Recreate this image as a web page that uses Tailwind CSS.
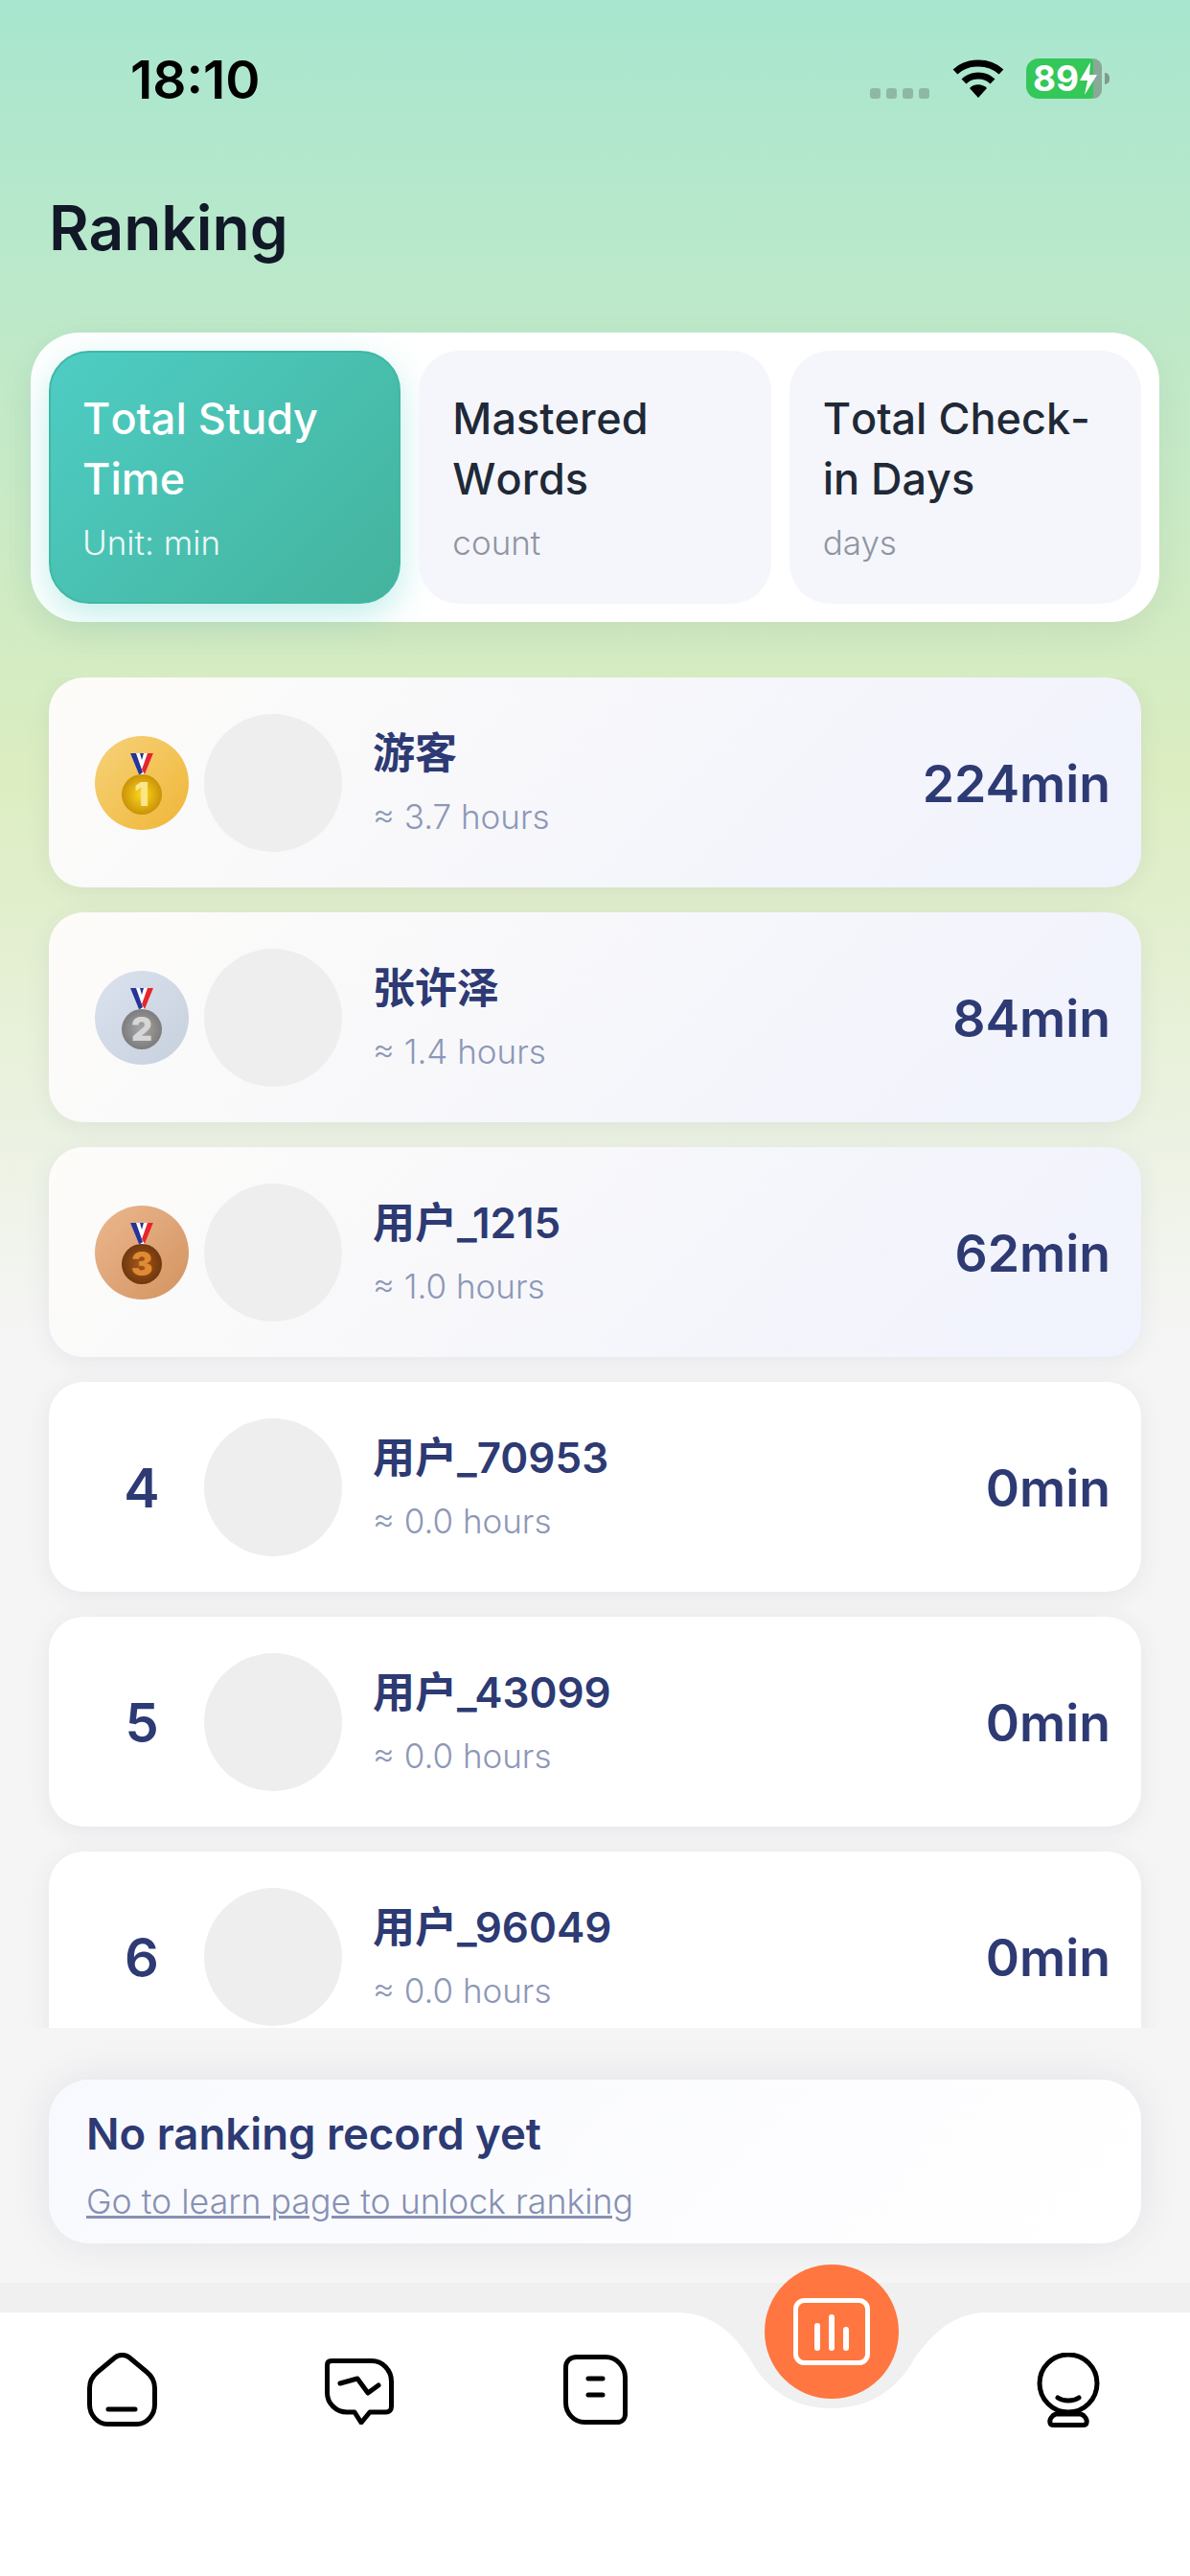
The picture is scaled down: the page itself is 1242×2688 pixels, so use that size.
<!DOCTYPE html>
<html lang="en">
  <head>
    <meta charset="UTF-8" />
    <meta name="viewport" content="width=device-width, initial-scale=1.0" />
    <title>Ranking</title>
    <script src="https://cdn.jsdelivr.net/npm/@tailwindcss/browser@4"></script>
  </head>
  <body>
    <div class="relative flex flex-col w-[1242px] h-[2688px] overflow-hidden font-['Inter','Noto_Sans_CJK_SC',sans-serif] bg-[linear-gradient(180deg,#a8e6cf_0%,#dcedc1_30%,#f5f5f5_52%,#f5f5f5_100%)]">
      <!-- status bar -->
      <div class="flex items-center justify-between h-[164px] pl-[136px] pr-[84px] shrink-0">
        <div class="mt-[2px] text-[55px] font-semibold text-black">18:10</div>
        <div class="flex items-center">
          <div class="flex gap-[6px] mt-[30px] mr-[24px]">
            <div class="w-[11px] h-[11px] rounded-[3px] bg-[#8fb8a3]"></div>
            <div class="w-[11px] h-[11px] rounded-[3px] bg-[#8fb8a3]"></div>
            <div class="w-[11px] h-[11px] rounded-[3px] bg-[#8fb8a3]"></div>
            <div class="w-[11px] h-[11px] rounded-[3px] bg-[#8fb8a3]"></div>
          </div>
          <svg class="w-[54px] h-[40px] mr-[23px]" viewBox="0 0 54 40" fill="none">
            <path d="M3 13 C16 1 38 1 51 13" stroke="#000" stroke-width="7" />
            <path d="M12 23 C20 15 34 15 42 23" stroke="#000" stroke-width="7" />
            <path d="M18 30 C23 25 31 25 36 30 L27 40 Z" fill="#000" />
          </svg>
          <div class="relative flex items-center w-[79px] h-[42px] pl-[7px] rounded-[13px] bg-[#34c759] text-[37px] leading-[42px] font-bold text-white">
            <div class="absolute top-0 right-0 w-[9px] h-full rounded-r-[13px] bg-[#8aa898]"></div>
            <span class="relative">89</span>
            <svg class="relative w-[20px] h-[34px]" viewBox="0 0 20 34"><path d="M12 0 L1 19 H9 L6 34 L19 13 H11 Z" fill="#fff" /></svg>
          </div>
          <div class="w-[5px] h-[12px] ml-[3px] rounded-r-full bg-[#7d9c8c]"></div>
        </div>
      </div>

      <!-- title -->
      <div class="h-[183px] pl-[51px] pt-[37px] text-[64px] leading-[74px] font-semibold text-[#111827] shrink-0">Ranking</div>

      <!-- metric tabs -->
      <div class="mx-[32px] p-[19px] grid grid-cols-3 gap-[19px] h-[302px] shrink-0 rounded-[51px] bg-white shadow-[0_12px_40px_rgba(0,0,0,0.06)]">
        <div class="rounded-[42px] px-[33px] pt-[37px] border-2 border-[#3fb8a4] bg-[linear-gradient(135deg,#4ecdc4,#44b39d)] shadow-[0_12px_36px_rgba(78,205,196,0.35)]">
          <div class="text-[45px] leading-[63px] font-medium [font-kerning:none] text-white">Total Study Time</div>
          <div class="mt-[12px] text-[35px] leading-[46px] font-light text-white/90">Unit: min</div>
        </div>
        <div class="rounded-[42px] px-[35px] pt-[39px] bg-[#f5f6fb]">
          <div class="text-[45px] leading-[63px] font-medium [font-kerning:none] text-[#1f2937]">Mastered Words</div>
          <div class="mt-[12px] text-[35px] leading-[46px] font-light text-[#8f95a3]">count</div>
        </div>
        <div class="rounded-[42px] px-[35px] pt-[39px] bg-[#f5f6fb]">
          <div class="text-[45px] leading-[63px] font-medium [font-kerning:none] text-[#1f2937]">Total Check-in Days</div>
          <div class="mt-[12px] text-[35px] leading-[46px] font-light text-[#8f95a3]">days</div>
        </div>
      </div>

      <!-- ranking list, clipped where the scroll area ends -->
      <div class="flex flex-col gap-[26px] h-[1409px] mt-[58px] px-[51px] overflow-hidden shrink-0">
        <div class="flex items-center h-[219px] shrink-0 pl-[48px] pr-[32px] rounded-[36px] bg-[linear-gradient(135deg,#fdfcf9,#f0f2fd)] shadow-[0_4px_24px_rgba(47,58,114,0.08)]">
          <svg class="w-[98px] h-[98px] shrink-0" viewBox="0 0 98 98">
            <defs>
              <linearGradient id="goldBg" x1="0" y1="0" x2="1" y2="1"><stop offset="0" stop-color="#f6d27a" /><stop offset="1" stop-color="#f0b636" /></linearGradient>
              <radialGradient id="goldM"><stop offset="0" stop-color="#ffd91a" /><stop offset="1" stop-color="#c99208" /></radialGradient>
            </defs>
            <circle cx="49" cy="49" r="49" fill="url(#goldBg)" />
            <path d="M37 18 H61 L52 40 H46 Z" fill="#fff" />
            <path d="M37 18 H43 L50 38 L47 40 H46 Z" fill="#26349a" />
            <path d="M47 18 H51 L49 25 Z" fill="#26349a" />
            <path d="M61 18 H55 L49 35 L52 40 Z" fill="#e5262c" />
            <circle cx="49" cy="61" r="21" fill="url(#goldM)" />
            <text x="49" y="73" text-anchor="middle" font-size="34" font-weight="900" fill="#fbe68d">1</text>
          </svg>
          <div class="w-[144px] h-[144px] ml-[16px] shrink-0 rounded-full bg-[#eeeeef]"></div>
          <div class="ml-[32px] flex-1">
            <div class="text-[44px] leading-[56px] font-semibold text-[#2d3a73]">游客</div>
            <div class="mt-[15px] text-[35px] leading-[46px] font-light text-[#8d97b8]">≈ 3.7 hours</div>
          </div>
          <div class="text-[53.5px] font-semibold text-[#2d3a73] mt-[4px]">224min</div>
        </div>

        <div class="flex items-center h-[219px] shrink-0 pl-[48px] pr-[32px] rounded-[36px] bg-[linear-gradient(135deg,#fdfcf9,#f0f2fd)] shadow-[0_4px_24px_rgba(47,58,114,0.08)]">
          <svg class="w-[98px] h-[98px] shrink-0" viewBox="0 0 98 98">
            <defs>
              <linearGradient id="silverBg" x1="0" y1="0" x2="1" y2="1"><stop offset="0" stop-color="#dbe2ee" /><stop offset="1" stop-color="#c7d0de" /></linearGradient>
              <radialGradient id="silverM"><stop offset="0" stop-color="#a8a8a8" /><stop offset="1" stop-color="#7c7c7c" /></radialGradient>
            </defs>
            <circle cx="49" cy="49" r="49" fill="url(#silverBg)" />
            <path d="M37 18 H61 L52 40 H46 Z" fill="#fff" />
            <path d="M37 18 H43 L50 38 L47 40 H46 Z" fill="#26349a" />
            <path d="M47 18 H51 L49 25 Z" fill="#26349a" />
            <path d="M61 18 H55 L49 35 L52 40 Z" fill="#e5262c" />
            <circle cx="49" cy="61" r="21" fill="url(#silverM)" />
            <text x="49" y="73" text-anchor="middle" font-size="34" font-weight="900" fill="#d6d6d6">2</text>
          </svg>
          <div class="w-[144px] h-[144px] ml-[16px] shrink-0 rounded-full bg-[#eeeeef]"></div>
          <div class="ml-[32px] flex-1">
            <div class="text-[44px] leading-[56px] font-semibold text-[#2d3a73]">张许泽</div>
            <div class="mt-[15px] text-[35px] leading-[46px] font-light text-[#8d97b8]">≈ 1.4 hours</div>
          </div>
          <div class="text-[53.5px] font-semibold text-[#2d3a73] mt-[4px]">84min</div>
        </div>

        <div class="flex items-center h-[219px] shrink-0 pl-[48px] pr-[32px] rounded-[36px] bg-[linear-gradient(135deg,#fdfcf9,#f0f2fd)] shadow-[0_4px_24px_rgba(47,58,114,0.08)]">
          <svg class="w-[98px] h-[98px] shrink-0" viewBox="0 0 98 98">
            <defs>
              <linearGradient id="bronzeBg" x1="0" y1="0" x2="1" y2="1"><stop offset="0" stop-color="#ebb78f" /><stop offset="1" stop-color="#d3935f" /></linearGradient>
              <radialGradient id="bronzeM"><stop offset="0" stop-color="#a8591a" /><stop offset="1" stop-color="#6f370e" /></radialGradient>
            </defs>
            <circle cx="49" cy="49" r="49" fill="url(#bronzeBg)" />
            <path d="M37 18 H61 L52 40 H46 Z" fill="#fff" />
            <path d="M37 18 H43 L50 38 L47 40 H46 Z" fill="#26349a" />
            <path d="M47 18 H51 L49 25 Z" fill="#26349a" />
            <path d="M61 18 H55 L49 35 L52 40 Z" fill="#e5262c" />
            <circle cx="49" cy="61" r="21" fill="url(#bronzeM)" />
            <text x="49" y="73" text-anchor="middle" font-size="34" font-weight="900" fill="#e08a33">3</text>
          </svg>
          <div class="w-[144px] h-[144px] ml-[16px] shrink-0 rounded-full bg-[#eeeeef]"></div>
          <div class="ml-[32px] flex-1">
            <div class="text-[44px] leading-[56px] font-semibold text-[#2d3a73]">用户_1215</div>
            <div class="mt-[15px] text-[35px] leading-[46px] font-light text-[#8d97b8]">≈ 1.0 hours</div>
          </div>
          <div class="text-[53.5px] font-semibold text-[#2d3a73] mt-[4px]">62min</div>
        </div>

        <div class="flex items-center h-[219px] shrink-0 pl-[48px] pr-[32px] rounded-[36px] bg-white shadow-[0_4px_24px_rgba(47,58,114,0.08)]">
          <div class="w-[98px] mt-[3px] shrink-0 text-center text-[56px] font-semibold text-[#2d3a73]">4</div>
          <div class="w-[144px] h-[144px] ml-[16px] shrink-0 rounded-full bg-[#eeeeef]"></div>
          <div class="ml-[32px] flex-1">
            <div class="text-[44px] leading-[56px] font-semibold text-[#2d3a73]">用户_70953</div>
            <div class="mt-[15px] text-[35px] leading-[46px] font-light text-[#8d97b8]">≈ 0.0 hours</div>
          </div>
          <div class="text-[53.5px] font-semibold text-[#2d3a73] mt-[4px]">0min</div>
        </div>

        <div class="flex items-center h-[219px] shrink-0 pl-[48px] pr-[32px] rounded-[36px] bg-white shadow-[0_4px_24px_rgba(47,58,114,0.08)]">
          <div class="w-[98px] mt-[3px] shrink-0 text-center text-[56px] font-semibold text-[#2d3a73]">5</div>
          <div class="w-[144px] h-[144px] ml-[16px] shrink-0 rounded-full bg-[#eeeeef]"></div>
          <div class="ml-[32px] flex-1">
            <div class="text-[44px] leading-[56px] font-semibold text-[#2d3a73]">用户_43099</div>
            <div class="mt-[15px] text-[35px] leading-[46px] font-light text-[#8d97b8]">≈ 0.0 hours</div>
          </div>
          <div class="text-[53.5px] font-semibold text-[#2d3a73] mt-[4px]">0min</div>
        </div>

        <div class="flex items-center h-[219px] shrink-0 pl-[48px] pr-[32px] rounded-[36px] bg-white shadow-[0_4px_24px_rgba(47,58,114,0.08)]">
          <div class="w-[98px] mt-[3px] shrink-0 text-center text-[56px] font-semibold text-[#2d3a73]">6</div>
          <div class="w-[144px] h-[144px] ml-[16px] shrink-0 rounded-full bg-[#eeeeef]"></div>
          <div class="ml-[32px] flex-1">
            <div class="text-[44px] leading-[56px] font-semibold text-[#2d3a73]">用户_96049</div>
            <div class="mt-[15px] text-[35px] leading-[46px] font-light text-[#8d97b8]">≈ 0.0 hours</div>
          </div>
          <div class="text-[53.5px] font-semibold text-[#2d3a73] mt-[4px]">0min</div>
        </div>
      </div>

      <!-- empty-record notice -->
      <div class="h-[171px] mt-[54px] mx-[51px] pl-[39px] pt-[29px] shrink-0 rounded-[42px] bg-[linear-gradient(135deg,#f8f9fe,#ffffff)] shadow-[0_0_40px_rgba(47,58,114,0.1)]">
        <div class="text-[45.5px] leading-[56px] font-semibold text-[#2d3a73]">No ranking record yet</div>
        <div class="mt-[19px] text-[35.7px] leading-[46px] font-light underline text-[#8790b3]">Go to learn page to unlock ranking</div>
      </div>

      <!-- bottom nav -->
      <div class="h-[31px] mt-[41px] shrink-0 bg-[#f0f0f0]"></div>
      <div class="relative flex-1 bg-white">
        <svg class="absolute left-[690px] top-0 w-[356px] h-[101px]" viewBox="0 0 356 101">
          <path d="M15 0 C60 0 80 30 92 47 C110 82 140 100 178 100 C216 100 246 82 265 47 C278 30 300 0 340 0 Z" fill="#f0f0f0" />
        </svg>

        <svg class="absolute left-[91px] top-[42px] w-[73px] h-[77px]" viewBox="0 0 73 77" fill="none" stroke="#000" stroke-width="5" stroke-linecap="round" stroke-linejoin="round">
          <path d="M29 5 C33 1.5 40 1.5 44 5 L62 20 C67 24 70.5 30 70.5 37 V54 C70.5 65 62 74.5 52 74.5 H21 C11 74.5 2.5 65 2.5 54 V37 C2.5 30 6 24 11 20 Z" />
          <path d="M22 59 H50" />
        </svg>
        <svg class="absolute left-[339px] top-[48px] w-[72px] h-[69px]" viewBox="0 0 72 69" fill="none" stroke="#000" stroke-width="5" stroke-linecap="round" stroke-linejoin="round">
          <path d="M7 2.5 H49 C60 2.5 69.5 12 69.5 24 V50 C69.5 54 67 56 64 56 H47 L38 67 L31 56 H23 C12 56 2.5 47 2.5 36 V7 C2.5 4 4 2.5 7 2.5 Z" />
          <path d="M16 26 L34 21 L45 36 L56 28" />
        </svg>
        <svg class="absolute left-[588px] top-[44px] w-[67px] h-[73px]" viewBox="0 0 67 73" fill="none" stroke="#000" stroke-width="5" stroke-linecap="round" stroke-linejoin="round">
          <path d="M14 2.5 H44 C55 2.5 64.5 12 64.5 24 V62 C64.5 67 61 70.5 56 70.5 H22 C11 70.5 2.5 61 2.5 50 V13 C2.5 7 7 2.5 14 2.5 Z" />
          <path d="M26 25 H41 M26 42 H41" />
        </svg>
        <svg class="absolute left-[1082px] top-[42px] w-[66px] h-[78px]" viewBox="0 0 66 78" fill="none" stroke="#000" stroke-width="5" stroke-linecap="round" stroke-linejoin="round">
          <circle cx="33" cy="32" r="30" />
          <path d="M22 47 C28 51 38 51 44 47" />
          <path d="M20 64 H46 C50 65 53 70 52 73 C52 75 50 75.5 48 75.5 H18 C16 75.5 14 75 14 73 C13 70 16 65 20 64 Z" />
        </svg>

        <!-- active tab sits over the notch -->
        <div class="absolute left-[798px] top-[-50px] flex items-center justify-center w-[140px] h-[140px] rounded-full bg-[#ff7640]">
          <svg class="w-[80px] h-[70px]" viewBox="0 0 80 70" fill="none" stroke="#fff" stroke-linecap="round">
            <rect x="2.5" y="2.5" width="75" height="65" rx="9" stroke-width="5" />
            <path d="M25 29 V52 M40 20 V52 M55 33 V52" stroke-width="6" />
          </svg>
        </div>
      </div>
    </div>
  </body>
</html>
